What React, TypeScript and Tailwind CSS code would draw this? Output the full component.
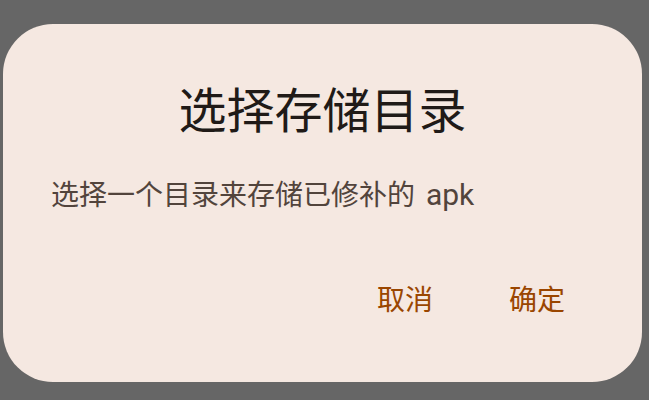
export default function App() {
  return (
    <div className="h-[400px] w-[649px] bg-[#666666] pt-[24px] pl-[3px] font-['Roboto','Noto_Sans_CJK_SC',sans-serif]">
      <div className="flex h-[358px] w-[639px] flex-col rounded-[50px] bg-[#f5e8e1] px-[48px] pt-[64px]">
        <h1 className="text-center text-[48px] leading-[48px] text-[#201a17]">选择存储目录</h1>
        <p className="mt-[45px] text-[28px] leading-[28px] text-[#52443c]">
          选择一个目录来存储已修补的 <span className="ml-[4px] text-[30px]">apk</span>
        </p>
        <div className="mt-[77px] mr-[15px] flex justify-end gap-[48px]">
          <button className="px-[14px] text-[28px] leading-[28px] text-[#9a4600]">取消</button>
          <button className="px-[14px] text-[28px] leading-[28px] text-[#9a4600]">确定</button>
        </div>
      </div>
    </div>
  );
}
